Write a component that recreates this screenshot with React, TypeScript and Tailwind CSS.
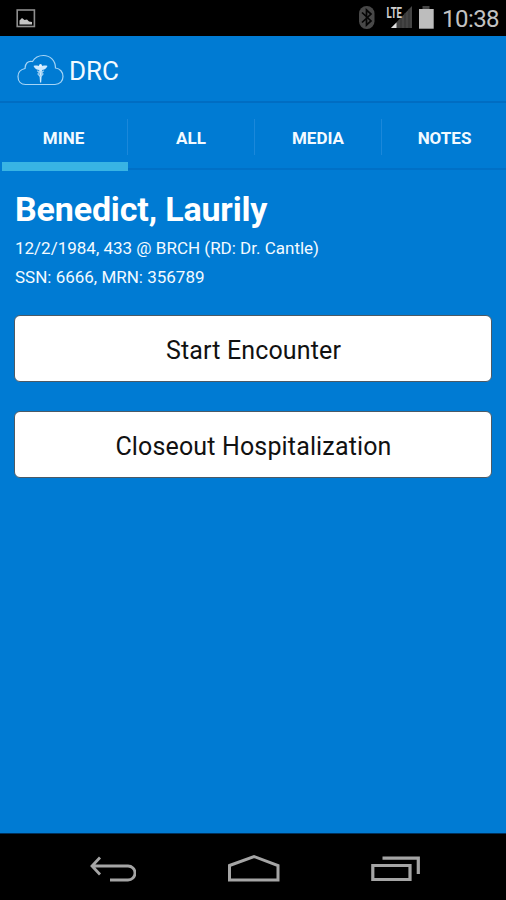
import React from "react";

const tabs = ["MINE", "ALL", "MEDIA", "NOTES"];

function StatusBar() {
  return (
    <div className="flex h-9 shrink-0 items-start bg-black">
      <svg className="ml-4 mt-[9px]" width="20" height="19" viewBox="0 0 20 19">
        <rect x="1.200" y="1" width="17.200" height="16.500" fill="none" stroke="#8e8e8e" strokeWidth="1.600" />
        <path d="M3.500 15.500V11.500L6 9L8.500 11L11 10.500L13 12.500L16 13V15.500Z" fill="#c4c4c4" />
      </svg>
      <div className="ml-auto flex items-start">
        <svg width="87" height="36" viewBox="350 0 87 36">
          <rect x="359" y="6" width="15.500" height="23" rx="7.500" fill="#484848" />
          <path d="M362 12.500L371 21L366.500 25V10L371 14L362 22.500" fill="none" stroke="#050505" strokeWidth="1.700" />
          <path d="M412 6V28H391Z" fill="#444" />
          <path d="M401 17V28M405 13V28M409 9V28" stroke="#303030" strokeWidth="1" />
          <path d="M386 5H402V17L400 18.500H386Z" fill="#000" />
          <path d="M396.500 22.500V28H391Z" fill="#e0e0e0" />
          <text x="386.500" y="17.500" textLength="15.500" lengthAdjust="spacingAndGlyphs" fill="#d0d0d0" fontSize="14" fontWeight="700" fontFamily="Roboto, sans-serif">LTE</text>
          <path d="M422.500 6H429.500V9H422.500Z" fill="#464646" />
          <path d="M419 9H433.700V28.700H419Z" fill="#bdbdbd" />
        </svg>
        <span className="mr-2 mt-[5px] w-[61px] whitespace-nowrap pl-[5px] text-[24px] leading-7 tracking-[-0.55px] text-[#c2c2c2]">10:38</span>
      </div>
    </div>
  );
}

function Header() {
  return (
    <header className="flex h-[67px] shrink-0 items-center border-b-2 border-[#006dc2] pl-[17px] pt-[3px]">
      <svg width="48" height="32" viewBox="0 0 48 32" fill="none">
        <path d="M8.500 30.500H38C43 30.500 46 27 46 22.500C46 18 43 14.500 38.500 14C38.500 6.500 33 1.500 26.500 1.500C21 1.500 17.500 4 15.500 7.500C11 6.500 8 9.500 8 14.500C3.500 15.500 1 18.500 1 22.500C1 27.500 4 30.500 8.500 30.500Z" stroke="#a5d4f5" strokeWidth="1.200" />
        <path d="M16.500 12C19 11 21.500 12.200 23.500 12.200C25.500 12.200 28 11 30.500 12C29 15 26.500 16 25 16L24.200 28.500H23L22.200 16C20.500 16 18 15 16.500 12Z" fill="#cfeaff" />
        <path d="M20 17C27.500 18.500 27.500 20.500 22.500 22.500M27 17C19.500 18.500 19.500 20.500 24.500 22.500" stroke="#afd9f7" strokeWidth="1.100" />
        <circle cx="23.500" cy="11.500" r="1.500" fill="#e8f6ff" />
      </svg>
      <h1 className="ml-[4px] pt-px text-[26px] leading-8 tracking-[-0.1px]">DRC</h1>
    </header>
  );
}

function Tabs() {
  return (
    <nav className="grid h-[68px] shrink-0 grid-cols-[128px_127px_127px_124px]">
      {tabs.map((label, index) => (
        <div key={label} className="flex flex-col">
          <div className={index < 3 ? "mt-[16px] flex h-[36px] items-center justify-center border-r border-[#1b88da] pt-px" : "mt-[16px] flex h-[36px] items-center justify-center pl-px pt-px"}>
            <span className="text-[17px] font-bold leading-5">{label}</span>
          </div>
          <div className={index === 0 ? "ml-[2px] mt-[7px] h-[9px] w-[126px] shrink-0 bg-[#38b4e4]" : "mt-[13px] h-[2px] bg-[#0070c6]"} />
        </div>
      ))}
    </nav>
  );
}

function ActionButton({ children }: { children: React.ReactNode }) {
  return (
    <button className="flex h-[67px] w-full items-center justify-center rounded-[6px] border border-[#4b5a66] bg-white pl-px pt-[4px] text-[25px] leading-8 tracking-[0.15px] text-[#111]">
      {children}
    </button>
  );
}

function NavigationBar() {
  return (
    <footer className="flex h-[67px] shrink-0 items-center justify-between border-t border-[#00305a] bg-black pl-[88px] pr-[85px] pt-[3px]">
      <svg width="48" height="28" viewBox="0 0 48 28" fill="none" stroke="#a5a5a5" strokeWidth="2.800">
        <path d="M12 2.500L4 11L12 19.500M4 11H40A7 7 0 0 1 40 25H22" />
      </svg>
      <svg width="54" height="30" viewBox="0 0 54 30" fill="none" stroke="#a5a5a5" strokeWidth="3">
        <path d="M2.500 11.500L27 2.500L51 11.500V26H2.500Z" />
      </svg>
      <svg width="50" height="28" viewBox="0 0 50 28" fill="none" stroke="#a5a5a5" strokeWidth="3.200">
        <path d="M1.800 10.500H39V24.500H1.800ZM11.500 3.200H47.300V19" />
      </svg>
    </footer>
  );
}

export default function App() {
  return (
    <div className="flex h-[900px] w-[506px] flex-col overflow-hidden bg-[#007bd3] font-[Roboto,sans-serif] text-[#f3faff]">
      <StatusBar />
      <Header />
      <Tabs />
      <main className="flex flex-1 flex-col px-[14px] pt-[18px]">
        <h2 className="pl-px text-[34px] font-bold leading-10 tracking-[-0.15px] text-white">Benedict, Laurily</h2>
        <p className="mt-[5px] whitespace-nowrap pl-px text-[17px] leading-[29px]">12/2/1984, 433 @ BRCH (RD: Dr. Cantle)</p>
        <p className="whitespace-nowrap pl-px text-[17px] leading-[28px]">SSN: 6666, MRN: 356789</p>
        <div className="mt-[24px] flex flex-col gap-[29px]">
          <ActionButton>Start Encounter</ActionButton>
          <ActionButton>Closeout Hospitalization</ActionButton>
        </div>
      </main>
      <NavigationBar />
    </div>
  );
}
